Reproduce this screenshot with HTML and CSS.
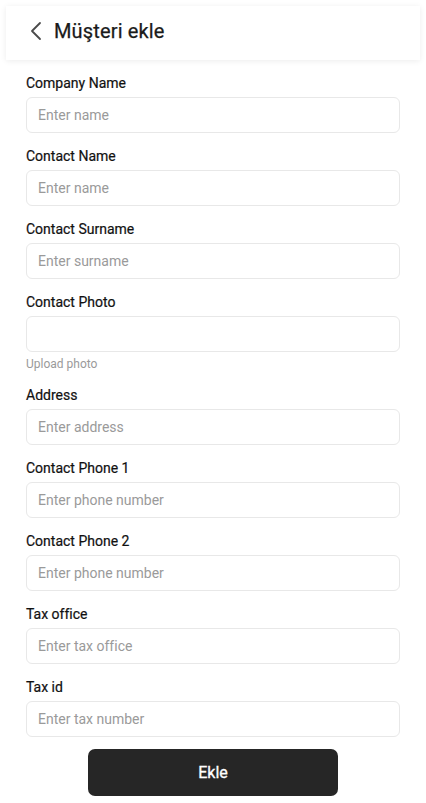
FILE: index.html
```html
<!DOCTYPE html>
<html lang="tr">
<head>
<meta charset="utf-8">
<link rel="stylesheet" href="styles.css">
</head>
<body>
<header class="topbar">
  <svg class="back" width="16" height="20" viewBox="0 0 16 20"><polyline points="12,2 4,10 12,18" fill="none" stroke="#4a4a4a" stroke-width="1.8" stroke-linecap="round" stroke-linejoin="round"/></svg>
  <h1 class="title">Müşteri ekle</h1>
</header>
<form class="form">
  <div class="field"><label class="label">Company Name</label><div class="input">Enter name</div></div>
  <div class="field"><label class="label">Contact Name</label><div class="input">Enter name</div></div>
  <div class="field"><label class="label">Contact Surname</label><div class="input">Enter surname</div></div>
  <div class="field"><label class="label">Contact Photo</label><div class="input"></div><div class="help">Upload photo</div></div>
  <div class="field"><label class="label">Address</label><div class="input">Enter address</div></div>
  <div class="field"><label class="label">Contact Phone 1</label><div class="input">Enter phone number</div></div>
  <div class="field"><label class="label">Contact Phone 2</label><div class="input">Enter phone number</div></div>
  <div class="field"><label class="label">Tax office</label><div class="input">Enter tax office</div></div>
  <div class="field"><label class="label">Tax id</label><div class="input">Enter tax number</div></div>
  <div class="actions"><button type="button" class="btn">Ekle</button></div>
</form>
</body>
</html>
```
FILE: styles.css
```css
* { box-sizing: border-box; }
body {
  margin: 0;
  background: #fff;
  font-family: Roboto, "Noto Sans", sans-serif;
  color: #1c1c1c;
}
.topbar {
  margin: 6px 6px 0;
  height: 54px;
  display: flex;
  align-items: center;
  padding-left: 22px;
  padding-bottom: 5px;
  background: #fff;
  box-shadow: 0 1px 6px rgba(0,0,0,0.08);
}
.back { display: block; margin-right: 10px; }
.title {
  margin: 0;
  font-size: 20px;
  font-weight: 400;
  letter-spacing: 0.15px;
  color: #1a1a1a;
  -webkit-text-stroke: 0.25px #1a1a1a;
}
.form {
  padding: 13px 26px 0;
  display: flex;
  flex-direction: column;
  gap: 13px;
}
.field { display: flex; flex-direction: column; }
.label {
  font-size: 14px;
  line-height: 20px;
  font-weight: 400;
  color: #111;
  -webkit-text-stroke: 0.2px #111;
  margin-bottom: 4px;
}
.input {
  height: 36px;
  border: 1px solid #e8e8e8;
  border-radius: 6px;
  padding: 0 11px;
  display: flex;
  align-items: center;
  font-size: 14px;
  color: #9a9a9a;
}
.help {
  margin-top: 4px;
  font-size: 12px;
  line-height: 16px;
  color: #9a9a9a;
}
.actions {
  display: flex;
  justify-content: center;
  margin-top: -1px;
}
.btn {
  width: 250px;
  height: 47px;
  border: none;
  border-radius: 7px;
  background: #262626;
  color: #fff;
  font-family: Roboto, "Noto Sans", sans-serif;
  font-size: 16px;
  font-weight: 400;
  -webkit-text-stroke: 0.3px #fff;
}
```
